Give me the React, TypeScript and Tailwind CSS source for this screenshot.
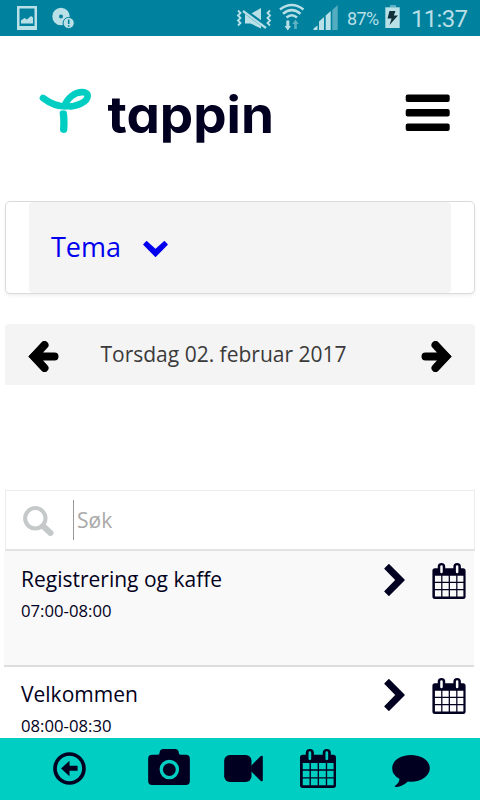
type IconProps = { className?: string };

// Month grid with two binder rings, cut out with evenodd so the background shows through
function CalendarIcon({ className }: IconProps) {
  return (
    <svg viewBox="0 0 106 115" className={className} fill="currentColor">
      <path
        fillRule="evenodd"
        d="M8 17H17V12Q17 0 29 0Q41 0 41 12V17H67V12Q67 0 79 0Q91 0 91 12V17H98Q106 17 106 25V107Q106 115 98 115H8Q0 115 0 107V25Q0 17 8 17Z
           M25 11V29Q25 33 29 33Q33 33 33 29V11Q33 7 29 7Q25 7 25 11Z
           M75 11V29Q75 33 79 33Q83 33 83 29V11Q83 7 79 7Q75 7 75 11Z
           M8 41H28V60H8Z M32 41H52V60H32Z M56 41H76V60H56Z M80 41H99V60H80Z
           M8 64H28V83H8Z M32 64H52V83H32Z M56 64H76V83H56Z M80 64H99V83H80Z
           M8 87H28V107H8Z M32 87H52V107H32Z M56 87H76V107H56Z M80 87H99V107H80Z"
      />
    </svg>
  );
}

function ArrowIcon({ className }: IconProps) {
  return (
    <svg viewBox="86 95 90 93" className={className} fill="none" stroke="currentColor" strokeWidth="24" strokeLinecap="round">
      <path d="M134 107L102 141.500L134 176M104 141.500H164" />
      <path d="M86 141.500L103 124V159Z" fill="currentColor" stroke="none" />
    </svg>
  );
}

function ChevronIcon({ className }: IconProps) {
  return (
    <svg viewBox="73 71 62 97" className={className} fill="none">
      <path
        d="M87 73L133 119.500L87 166L75 154L109 119.500L75 85Z"
        fill="currentColor"
        stroke="currentColor"
        strokeWidth="4"
        strokeLinejoin="round"
      />
    </svg>
  );
}

function StatusBar() {
  return (
    <div className="flex h-9 shrink-0 items-center justify-between bg-[#00829e] font-[Roboto,sans-serif] text-[#b9dfe7]">
      <svg viewBox="0 0 90 36" className="h-9 w-[90px]" fill="currentColor">
        <path fillRule="evenodd" d="M17 6H37V30H17Z M19.500 8.500H34.500V26H19.500Z" />
        <path d="M21 23.500V20.500L24.500 18L27 19.500L31 16L33 17.500V23.500Z" />
        <path fillRule="evenodd" d="M61 7.800A8.700 8.700 0 1 0 61 25.200A8.700 8.700 0 1 0 61 7.800ZM61 14.400A2 2 0 1 1 61 18.400A2 2 0 1 1 61 14.400Z" />
        <circle cx="68.700" cy="23" r="5.600" stroke="#00829e" strokeWidth="1" />
        <path d="M68.700 19.500V24M68.700 25.200V26.700" stroke="#00829e" strokeWidth="1.600" />
      </svg>

      <div className="flex h-9 items-center">
        <svg viewBox="234 0 108 36" className="h-9 w-[108px]" fill="currentColor">
          {/* Vibrate / muted */}
          <path d="M245 14H250.500L261 8V28.500L250.500 23.500H245Z" />
          <path d="M242.500 9.500L266.500 27" stroke="#00829e" strokeWidth="4.500" />
          <path d="M243 11L266 28" stroke="currentColor" strokeWidth="2.200" />
          <path
            d="M238 10.500L240.500 13L238 15.500L240.500 18L238 20.500L240.500 23L238 25.500M270 10.500L267.500 13L270 15.500L267.500 18L270 20.500L267.500 23L270 25.500"
            fill="none"
            stroke="currentColor"
            strokeWidth="1.800"
          />
          {/* Wifi */}
          <path
            d="M280 9.500Q291.700 0.500 303.500 9.500M283 13.700Q291.700 6.500 300.500 13.700M286.500 17.500Q291.700 13 297 17.500"
            fill="none"
            stroke="currentColor"
            strokeWidth="2.600"
          />
          <path d="M286.300 20.500H289.300V26H291L287.800 30.500L284.600 26H286.300Z" />
          <path d="M294.200 29V24H292.300L295.500 19.500L298.700 24H296.800V29Z" opacity=".5" />
          {/* Signal */}
          <path d="M313.500 30V28.500L317.500 25.500V30ZM319 30V21.500L324 17V30ZM325.700 30V15.500L330.700 11V30Z" />
          <path d="M332.300 30V10L337.700 5V30Z" opacity=".45" />
        </svg>
        <span className="ml-[5px] w-[38px] pt-[2px] text-[18px] leading-9 tracking-[-0.6px]">87%</span>
        <svg viewBox="385 0 15 36" className="h-9 w-[15px]" fill="currentColor">
          <path d="M390 5H396V7.500H390Z" opacity=".5" />
          <path d="M385.300 7.300H399.700V28H385.300Z" />
          <path d="M389.500 11H395.500L393.800 15.500H398L389.500 25L391.600 18.500H387.500Z" fill="#10303a" />
        </svg>
        <span className="ml-[11px] w-[69px] pt-[2px] text-[24px] leading-9 tracking-[-0.7px]">11:37</span>
      </div>
    </div>
  );
}

function Header() {
  return (
    <header className="flex h-[165px] shrink-0 items-start justify-between pl-[38px] pr-[30px] pt-[48px]">
      <svg viewBox="38 84 240 64" className="h-16 w-[240px]">
        <g transform="translate(20 70) scale(.3333)" fill="none" stroke="#00cec3" strokeLinecap="round">
          <path
            d="M69 84C95 104 120 110 140 110C172 109 203 96 203 77C203 63 174 62 155 78C144 87 137 97 134 108"
            strokeWidth="20"
          />
          <path d="M130 131Q133 150 131 178" strokeWidth="22" />
          <path d="M115 119Q132 122 147 119" stroke="#fff" strokeWidth="2" />
        </g>
        <text
          x="107.500"
          y="133.300"
          textLength="166.500"
          lengthAdjust="spacingAndGlyphs"
          fill="#020020"
          fontFamily="Inter, sans-serif"
          fontWeight="700"
          fontSize="50.500"
          style={{ fontFeatureSettings: '"cv11", "ss03"' }}
        >
          tappin
        </text>
      </svg>
      <svg viewBox="405 94 45 38" className="mt-[10px] h-[38px] w-[45px]">
        <rect x="405.700" y="94.500" width="44" height="7.500" rx="2" />
        <rect x="405.700" y="109" width="44" height="7.500" rx="2" />
        <rect x="405.700" y="123.500" width="44" height="7.500" rx="2" />
      </svg>
    </header>
  );
}

const sessions = [
  { title: "Registrering og kaffe", time: "07:00-08:00", row: "bg-[#f9f9f9] pt-[13px]" },
  { title: "Velkommen", time: "08:00-08:30", row: "bg-white pt-[12px]" },
];

function BottomBar() {
  return (
    <nav className="flex h-[62px] shrink-0 items-start bg-[#00cec3] pl-[53px] pt-[11px]">
      <svg viewBox="159 306 98 98" className="mt-[3px] size-[33px]" fill="currentColor">
        <circle cx="208" cy="355" r="43" fill="none" stroke="currentColor" strokeWidth="11" />
        <path d="M183 355L208 332V347H232V362H208V378Z" />
      </svg>
      <svg viewBox="444 298 124 107" className="ml-[62px] h-9 w-[42px]" fill="currentColor">
        <path
          fillRule="evenodd"
          d="M456 315H473Q478 315 478 309Q479 298 489 298H524Q534 298 535 309Q535 315 541 315H556Q568 315 568 327V393Q568 405 556 405H456Q444 405 444 393V327Q444 315 456 315ZM507 330A29 29 0 1 0 507 388A29 29 0 1 0 507 330Z"
        />
        <circle cx="507" cy="359" r="19" />
      </svg>
      <svg viewBox="42 75 116 81" className="ml-[34px] mt-[6px] h-[27px] w-[39px]" fill="currentColor">
        <rect x="42" y="75" width="82" height="81" rx="17" />
        <path d="M123 107L152 78Q158 75 158 81V150Q158 156 152 153L123 124Z" />
      </svg>
      <CalendarIcon className="ml-[37px] h-[39px] w-9" />
      <svg viewBox="547 75 114 97" className="ml-[56px] mt-[6px] h-8 w-[38px]" fill="currentColor">
        <path d="M604 75C636 75 661 92 661 115C661 138 636 156 604 156Q599 156 595 155Q577 171 557 172Q553 171 556 168Q568 160 569 147Q547 136 547 115C547 92 572 75 604 75Z" />
      </svg>
    </nav>
  );
}

export default function App() {
  return (
    <div className="flex h-[800px] w-[480px] flex-col overflow-hidden bg-white font-['Open_Sans',sans-serif] text-[#020020]">
      <StatusBar />
      <Header />

      {/* Theme selector */}
      <div className="mx-[5px] h-[93px] shrink-0 rounded-[5px] border border-[#dadada] px-[23px] shadow-[0_2px_3px_rgba(0,0,0,0.06)]">
        <div className="flex h-full items-center rounded-sm bg-[#f4f4f4] pl-[22px] text-[#0000ee]">
          <span className="w-[92px] pb-px text-[27px] leading-9">Tema</span>
          <svg viewBox="431 155 72 47" className="mt-[3px] h-4 w-[25px]" fill="currentColor">
            <path
              d="M441 157L467 181L493 157L501 165L467 200L433 165Z"
              stroke="currentColor"
              strokeWidth="4"
              strokeLinejoin="round"
            />
          </svg>
        </div>
      </div>

      {/* Date picker */}
      <div className="mx-[5px] mt-[30px] flex h-[61px] shrink-0 items-center justify-between rounded-t bg-[#f4f4f4] px-[23px] text-black">
        <ArrowIcon className="mt-[4px] h-[31px] w-[31px]" />
        <span className="mr-[33px] pb-[2px] text-[21px] leading-8 text-[#3a3a3a]">Torsdag 02. februar 2017</span>
        <ArrowIcon className="mt-[4px] h-[31px] w-[31px] rotate-180" />
      </div>

      {/* Search */}
      <div className="mx-[5px] mt-[105px] flex h-[61px] shrink-0 items-center border border-[#ececec] border-b-2 border-b-[#e2e2e2] pl-[17px]">
        <svg viewBox="23 506 31 31" className="mt-[2px] size-[31px]" fill="none" stroke="#c5c9ca">
          <circle cx="35.300" cy="518.300" r="10.200" strokeWidth="4" />
          <path d="M43 526L50.500 533" strokeWidth="6" strokeLinecap="round" />
        </svg>
        <div className="ml-[19px] h-10 w-px bg-[#999]" />
        <span className="ml-[3px] pb-px text-[21px] leading-8 text-[#a9a9a9]">Søk</span>
      </div>

      {/* Programme */}
      <ul className="min-h-0 flex-1 overflow-hidden pl-1 pr-[6px]">
        {sessions.map((session) => (
          <li
            key={session.time}
            className={`flex h-[116px] items-start border-b-2 border-[#dedede] pl-[17px] pr-[8px] ${session.row}`}
          >
            <div className="flex-1">
              <p className="text-[21px] leading-[30px]">{session.title}</p>
              <p className="mt-[6px] text-[16.700px] leading-[22px]">{session.time}</p>
            </div>
            <ChevronIcon className="h-8 w-[21px]" />
            <CalendarIcon className="-mt-px ml-[27px] h-9 w-[34px]" />
          </li>
        ))}
      </ul>

      <BottomBar />
    </div>
  );
}
